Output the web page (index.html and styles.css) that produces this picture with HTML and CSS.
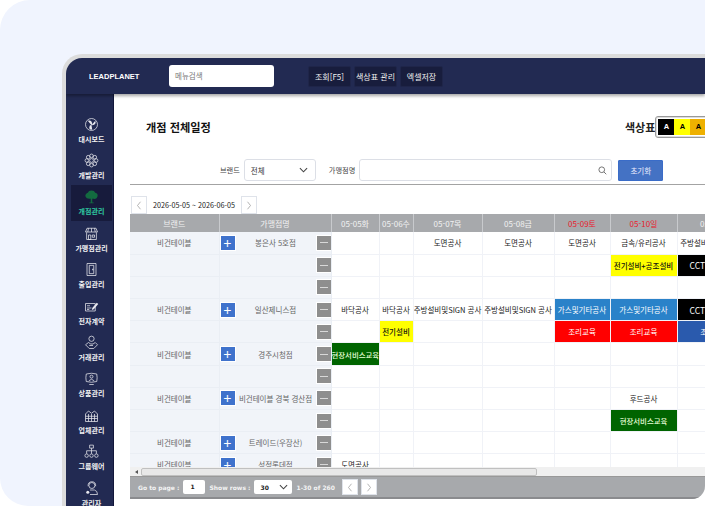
FILE: index.html
```html
<!DOCTYPE html>
<html lang="ko">
<head>
  <meta charset="UTF-8">
  <title>LEADPLANET - 개점 전체일정</title>
  <link rel="stylesheet" href="styles.css">
</head>
<body>
  <div class="panel">
    <div class="frame">

      <header class="topbar">
        <div class="logo">LEADPLANET</div>
        <div class="menu-search">메뉴검색</div>
        <div class="top-buttons">
          <button class="top-btn">조회[F5]</button>
          <button class="top-btn">색상표 관리</button>
          <button class="top-btn">엑셀저장</button>
        </div>
      </header>

      <div class="body">
        <nav class="sidebar">
          <a class="side-item">
            <svg viewBox="0 0 20 20"><circle cx="10" cy="10" r="8"/><path class="solid" d="M10 11 5 5q5-2 6 4zM10 11l5-6q2 5-4 6zM10 11l1 6q-6 0-3-6z"/></svg>
            <span>대시보드</span>
          </a>
          <a class="side-item">
            <svg viewBox="0 0 20 20"><circle cx="10" cy="10" r="2.6"/><circle cx="10" cy="3.8" r="2.4"/><circle cx="10" cy="16.2" r="2.4"/><circle cx="3.8" cy="10" r="2.4"/><circle cx="16.2" cy="10" r="2.4"/><circle cx="5.6" cy="5.6" r="2.4"/><circle cx="14.4" cy="5.6" r="2.4"/><circle cx="5.6" cy="14.4" r="2.4"/><circle cx="14.4" cy="14.4" r="2.4"/></svg>
            <span>개발관리</span>
          </a>
          <a class="side-item active">
            <svg viewBox="0 0 20 20"><path class="solid" d="M10 2q4 0 5 3 4 1 3 5t-5 3H7q-4 0-5-3t3-5q1-3 5-3z"/><path class="solid" d="M9 12h2v6h2v1H7v-1h2z"/></svg>
            <span>개점관리</span>
          </a>
          <a class="side-item">
            <svg viewBox="0 0 20 20"><path d="M4 3h12l2 5H2zM6 3 5 8M10 3v5M14 3l1 5"/><path d="M3.500 8.500V18h13V8.500M6 12h3v6H6zM11 12h3v3h-3z"/></svg>
            <span>가맹점관리</span>
          </a>
          <a class="side-item">
            <svg viewBox="0 0 20 20"><path d="M4 2h12v16H4zM7 4.500h6v11H7z"/><path class="solid" d="M11 9h1.500v2H11z"/></svg>
            <span>출입관리</span>
          </a>
          <a class="side-item">
            <svg viewBox="0 0 20 20"><path d="M2 6h13v10H2zM4 9h4M4 12h6M4 14h3"/><path class="solid" d="m11 12 6-7 2 1.500-6 7-2.500 1z"/></svg>
            <span>전자계약</span>
          </a>
          <a class="side-item">
            <svg viewBox="0 0 20 20"><circle cx="10" cy="5" r="3.500"/><path d="M2 13l4-3 3 2h3l3-2 3 3-5 5H7z"/><path d="M7 14h5"/></svg>
            <span>거래관리</span>
          </a>
          <a class="side-item">
            <svg viewBox="0 0 20 20"><path d="M3 4q7-2 14 0 1 5 0 10-7 2-14 0-1-5 0-10zM7 18h6"/><circle cx="10" cy="7.500" r="2"/><path d="M6.500 13q3.500-4 7 0"/></svg>
            <span>상품관리</span>
          </a>
          <a class="side-item">
            <svg viewBox="0 0 20 20"><path d="M2 8l4-4 4 3 4-3 4 4v10H2zM2 11h16M2 14h16M6 8v10M10 8v10M14 8v10"/></svg>
            <span>업체관리</span>
          </a>
          <a class="side-item">
            <svg viewBox="0 0 20 20"><path d="M7.500 1.500h5v4h-5zM10 5.500V9M3.500 13v-4h13v4M10 9v4"/><circle cx="3.500" cy="15.500" r="2.300"/><circle cx="10" cy="15.500" r="2.300"/><circle cx="16.500" cy="15.500" r="2.300"/></svg>
            <span>그룹웨어</span>
          </a>
          <a class="side-item">
            <svg viewBox="0 0 20 20"><circle cx="10.500" cy="6" r="4"/><path d="M5.500 7q-.5-6 5-6t5 6M8 18h10q0-5-4-6H8"/><circle class="solid" cx="5" cy="15" r="2"/></svg>
            <span>관리자</span>
          </a>
        </nav>

        <main class="main">
          <div class="title-row">
            <h1 class="page-title">개점 전체일정</h1>
            <div class="legend">
              <span class="legend-label">색상표</span>
              <div class="swatches">
                <span class="swatch sw-black">A</span>
                <span class="swatch sw-yellow">A</span>
                <span class="swatch sw-orange">A</span>
                <span class="swatch sw-olive">A</span>
              </div>
            </div>
          </div>

          <div class="filter-row">
            <label class="filter-label">브랜드</label>
            <div class="filter-select">
              <span>전체</span>
              <svg class="chev" viewBox="0 0 10 6"><path d="M1 1l4 4 4-4"/></svg>
            </div>
            <label class="filter-label store-label">가맹점명</label>
            <div class="filter-input">
              <svg class="search-ico" viewBox="0 0 12 12"><circle cx="5" cy="5" r="3.800"/><path d="M8 8l3 3"/></svg>
            </div>
            <button class="reset-btn">초기화</button>
          </div>

          <div class="date-nav">
            <button class="nav-btn"><svg viewBox="0 0 8 12"><path d="M6 1 2 6l4 5"/></svg></button>
            <span class="date-range">2026-05-05 ~ 2026-06-05</span>
            <button class="nav-btn"><svg viewBox="0 0 8 12"><path d="M2 1l4 5-4 5"/></svg></button>
          </div>

          <div class="grid-box">
            <div class="grid-scroll">
              <table class="grid">
                <colgroup>
                  <col class="c-brand"><col class="c-store"><col class="c-d1"><col class="c-d2"><col class="c-d3"><col class="c-d4"><col class="c-d5"><col class="c-d6"><col class="c-d7">
                </colgroup>
                <thead>
                  <tr>
                    <th>브랜드</th><th>가맹점명</th><th>05-05화</th><th>05-06수</th><th>05-07목</th><th>05-08금</th><th class="red">05-09토</th><th class="red">05-10일</th><th>05-11월</th>
                  </tr>
                </thead>
                <tbody>
                  <tr>
                    <td class="frozen">비건테이블</td>
                    <td class="frozen"><div class="store"><b class="plus">+</b><span>봉은사 5호점</span><b class="minus"></b></div></td>
                    <td></td><td></td><td>도면공사</td><td>도면공사</td><td>도면공사</td><td>금속/유리공사</td><td>주방설비및SIGN 공사</td>
                  </tr>
                  <tr>
                    <td class="frozen"></td>
                    <td class="frozen"><div class="store"><span></span><b class="minus"></b></div></td>
                    <td></td><td></td><td></td><td></td><td></td><td class="t-yellow">전기설비+공조설비</td><td class="t-black">CCTV</td>
                  </tr>
                  <tr>
                    <td class="frozen"></td>
                    <td class="frozen"><div class="store"><span></span><b class="minus"></b></div></td>
                    <td></td><td></td><td></td><td></td><td></td><td></td><td></td>
                  </tr>
                  <tr>
                    <td class="frozen">비건테이블</td>
                    <td class="frozen"><div class="store"><b class="plus">+</b><span>일산제니스점</span><b class="minus"></b></div></td>
                    <td>바닥공사</td><td>바닥공사</td><td>주방설비및SIGN 공사</td><td>주방설비및SIGN 공사</td><td class="t-blue">가스및기타공사</td><td class="t-blue">가스및기타공사</td><td class="t-black">CCTV</td>
                  </tr>
                  <tr>
                    <td class="frozen"></td>
                    <td class="frozen"><div class="store"><span></span><b class="minus"></b></div></td>
                    <td></td><td class="t-yellow">전기설비</td><td></td><td></td><td class="t-red">조리교육</td><td class="t-red">조리교육</td><td class="t-navy">조리교육</td>
                  </tr>
                  <tr>
                    <td class="frozen">비건테이블</td>
                    <td class="frozen"><div class="store"><b class="plus">+</b><span>경주시청점</span><b class="minus"></b></div></td>
                    <td class="t-green">현장서비스교육</td><td></td><td></td><td></td><td></td><td></td><td></td>
                  </tr>
                  <tr>
                    <td class="frozen"></td>
                    <td class="frozen"><div class="store"><span></span><b class="minus"></b></div></td>
                    <td></td><td></td><td></td><td></td><td></td><td></td><td></td>
                  </tr>
                  <tr>
                    <td class="frozen">비건테이블</td>
                    <td class="frozen"><div class="store"><b class="plus">+</b><span>비건테이블 경북 경산점</span><b class="minus"></b></div></td>
                    <td></td><td></td><td></td><td></td><td></td><td>후드공사</td><td></td>
                  </tr>
                  <tr>
                    <td class="frozen"></td>
                    <td class="frozen"><div class="store"><span></span><b class="minus"></b></div></td>
                    <td></td><td></td><td></td><td></td><td></td><td class="t-green">현장서비스교육</td><td></td>
                  </tr>
                  <tr>
                    <td class="frozen">비건테이블</td>
                    <td class="frozen"><div class="store"><b class="plus">+</b><span>트레이드(우장산)</span><b class="minus"></b></div></td>
                    <td></td><td></td><td></td><td></td><td></td><td></td><td></td>
                  </tr>
                  <tr>
                    <td class="frozen">비건테이블</td>
                    <td class="frozen"><div class="store"><b class="plus">+</b><span>성정롯데점</span><b class="minus"></b></div></td>
                    <td>도면공사</td><td></td><td></td><td></td><td></td><td></td><td></td>
                  </tr>
                </tbody>
              </table>
            </div>

            <div class="hscroll">
              <span class="hscroll-arrow"></span>
              <span class="hscroll-thumb"></span>
            </div>

            <div class="pager">
              <span>Go to page :</span>
              <span class="pager-input">1</span>
              <span>Show rows :</span>
              <span class="pager-select">30<svg class="chev" viewBox="0 0 10 6"><path d="M1 1l4 4 4-4"/></svg></span>
              <span>1-30 of 260</span>
              <div class="pager-nav">
                <button class="nav-btn"><svg viewBox="0 0 8 12"><path d="M6 1 2 6l4 5"/></svg></button>
                <button class="nav-btn"><svg viewBox="0 0 8 12"><path d="M2 1l4 5-4 5"/></svg></button>
              </div>
            </div>
          </div>
        </main>
      </div>
    </div>
  </div>
</body>
</html>
```

FILE: styles.css
```css
* {
  box-sizing: border-box;
}

html, body {
  margin: 0;
  height: 506px;
  overflow: hidden;
  background-color: #fff;
}

body {
  font-family: 'Noto Sans CJK KR', 'Noto Sans', sans-serif;
  color: #222;
}

button {
  font-family: inherit;
  cursor: pointer;
}

.panel {
  width: 705px;
  height: 506px;
  padding: 54px 0 0 62px;
  background-color: #f0f4fe;
  border-radius: 30px 0 0 28px;
  overflow: hidden;
}

.frame {
  width: 643px;
  height: 452px;
  display: flex;
  flex-direction: column;
  border: 4px solid #dcdcdc;
  border-width: 4px 0 0 4px;
  border-radius: 20px 0 0 0;
  overflow: hidden;
  background-color: #fff;
}

/* top bar */
.topbar {
  position: relative;
  z-index: 2;
  flex: 0 0 36px;
  display: flex;
  align-items: center;
  background-color: #222a52;
  box-shadow: 0 2px 3px rgba(0, 0, 0, 0.35);
}

.logo {
  width: 103px;
  padding-left: 23px;
  color: #fff;
  font-size: 7.5px;
  font-weight: 700;
  font-family: 'Liberation Sans', sans-serif;
  white-space: nowrap;
}

.menu-search {
  width: 105px;
  height: 22px;
  padding-left: 6px;
  line-height: 22px;
  font-size: 7.5px;
  color: #777;
  background-color: #fff;
  border-radius: 3px;
}

.top-buttons {
  display: flex;
  gap: 3px;
  margin-left: 34px;
  padding-top: 1px;
}

.top-btn {
  width: 43px;
  height: 21px;
  padding: 0;
  border: 1px solid #1f2549;
  border-radius: 2px;
  background-color: #181d3d;
  color: #f0f0f0;
  font-size: 8px;
  white-space: nowrap;
}

/* sidebar */
.body {
  flex: 1;
  display: flex;
  min-height: 0;
}

.sidebar {
  flex: 0 0 48px;
  padding: 18px 1px 0 5px;
  background-color: #222a52;
  border-right: 1px solid #12163a;
}

.side-item {
  height: 36.4px;
  display: flex;
  flex-direction: column;
  align-items: center;
  justify-content: center;
  gap: 3px;
  color: #f2f2f2;
  font-size: 7px;
  font-weight: 700;
  line-height: 9px;
  white-space: nowrap;
}

.side-item svg {
  width: 15px;
  height: 15px;
  fill: none;
  stroke: #e8e8ee;
  stroke-width: 1;
}

.side-item svg .solid {
  fill: #e8e8ee;
  stroke: none;
}

.side-item.active {
  background-color: #171b3c;
  color: #2fc9a0;
}

.side-item.active svg .solid {
  fill: #136b40;
}

/* main */
.main {
  flex: 1;
  min-width: 0;
  padding: 22px 0 0 16px;
}

.title-row {
  height: 22px;
  display: flex;
  justify-content: space-between;
  align-items: center;
}

.page-title {
  margin: 0 0 0 16px;
  font-size: 11.2px;
  font-weight: 700;
  color: #111;
}

.legend {
  width: 80px;
  display: flex;
  align-items: center;
  overflow: hidden;
}

.legend-label {
  flex: 0 0 29.5px;
  font-size: 11px;
  font-weight: 700;
  white-space: nowrap;
  color: #222;
}

.swatches {
  flex-shrink: 0;
  display: flex;
  padding: 2px;
  height: 22px;
  border: 1px solid #999;
  border-radius: 3px;
  box-shadow: 0 0 0 1px #ddd inset;
}

.swatch {
  width: 16px;
  height: 16px;
  line-height: 16px;
  text-align: center;
  font-size: 7.5px;
  font-weight: 700;
  font-family: 'Liberation Sans', sans-serif;
}

.sw-black { background-color: #000; color: #fff; }
.sw-yellow { background-color: #ff0; color: #000; }
.sw-orange { background-color: #eeb000; color: #000; }
.sw-olive { background-color: #8a9a00; color: #000; }

.filter-row {
  height: 26px;
  margin-top: 21px;
  padding: 0 0 3px 90px;
  display: flex;
  align-items: center;
  border-bottom: 1.5px solid #a3a3a3;
}

.filter-label {
  font-size: 7.2px;
  color: #444;
  white-space: nowrap;
}

.store-label {
  margin-left: 13px;
}

.filter-select {
  width: 72px;
  height: 22px;
  margin-left: 4px;
  padding: 0 7px 0 6px;
  display: flex;
  align-items: center;
  justify-content: space-between;
  font-size: 7.5px;
  color: #333;
  border: 1px solid #dcdfe6;
  border-radius: 3px;
}

.chev {
  width: 9px;
  height: 6px;
  fill: none;
  stroke: #444;
  stroke-width: 1.2;
}

.filter-input {
  width: 253px;
  height: 22px;
  margin-left: 4px;
  padding-right: 4px;
  display: flex;
  align-items: center;
  justify-content: flex-end;
  border: 1px solid #dcdfe6;
  border-radius: 3px;
}

.search-ico {
  width: 9px;
  height: 9px;
  fill: none;
  stroke: #666;
  stroke-width: 1.2;
}

.reset-btn {
  width: 45px;
  height: 21px;
  margin-left: 6px;
  padding: 0;
  border: 1px solid #3a6cc8;
  border-radius: 1px;
  background-color: #4472c4;
  color: #eef;
  font-size: 7.5px;
}

.date-nav {
  height: 18px;
  margin-top: 11px;
  padding-left: 1px;
  display: flex;
  align-items: center;
}

.nav-btn {
  width: 16px;
  height: 18px;
  padding: 0;
  display: flex;
  align-items: center;
  justify-content: center;
  background-color: #fff;
  border: 1px solid #dfe3ea;
}

.nav-btn svg {
  width: 6px;
  height: 9px;
  fill: none;
  stroke: #999;
  stroke-width: 1;
}

.date-range {
  width: 94px;
  text-align: center;
  font-size: 7.2px;
  color: #222;
  white-space: nowrap;
}

/* grid */
.grid-box {
  width: 575px;
  height: 285px;
  display: flex;
  flex-direction: column;
  border-radius: 0 0 13px 0;
  overflow: hidden;
}

.grid-scroll {
  flex: 0 0 253px;
  overflow: hidden;
}

.grid {
  width: 620px;
  table-layout: fixed;
  border-collapse: collapse;
  font-size: 7.5px;
}

.c-brand { width: 89px; }
.c-store { width: 112px; }
.c-d1 { width: 48px; }
.c-d2 { width: 34px; }
.c-d3 { width: 69px; }
.c-d4 { width: 72px; }
.c-d5 { width: 56px; }
.c-d6 { width: 67px; }
.c-d7 { width: 74px; }

.grid th {
  height: 18px;
  padding: 0;
  font-size: 8px;
  font-weight: 400;
  color: #f2f2f2;
  background-color: #a7a9ac;
  border-right: 1px solid #c8cacd;
  white-space: nowrap;
}

.grid th.red {
  color: #e8202c;
}

.grid td {
  height: 22.2px;
  padding: 0;
  text-align: center;
  white-space: nowrap;
  overflow: hidden;
  color: #222;
  border-right: 1px solid #f0f2f7;
  border-bottom: 1px solid #f0f2f7;
}

.grid td.frozen {
  background-color: #f1f4f9;
  color: #666;
  border-color: #eaeef4;
}

.store {
  display: flex;
  align-items: center;
  padding: 0 0 0 1px;
}

.store span {
  flex: 1;
  text-align: center;
}

.plus, .minus {
  flex: 0 0 14px;
  width: 14px;
  height: 14px;
  display: flex;
  align-items: center;
  justify-content: center;
}

.plus {
  background-color: #3f72cc;
  color: #fff;
  font-size: 14px;
  font-weight: 400;
  line-height: 14px;
  box-shadow: 0 0 0 1px #fff;
}

.minus {
  background-color: #8e8e8e;
  box-shadow: 0 0 0 1px #fff;
}

.minus::before {
  content: "";
  width: 8px;
  height: 1px;
  background-color: #d8d8d8;
}

.t-yellow { background-color: #ff0; color: #111 !important; font-weight: 500; }
.t-black { background-color: #000; color: #fff !important; text-align: left !important; padding-left: 12px !important; font-size: 8.5px; }
.t-blue { background-color: #2a82c9; color: #fff !important; }
.t-red { background-color: #f00; color: #fff !important; }
.t-navy { background-color: #2a5aad; color: #fff !important; }
.t-green { background-color: #006400; color: #e8ffd8 !important; font-size: 7.4px; font-weight: 500; }

.hscroll {
  flex: 0 0 9px;
  display: flex;
  align-items: center;
  padding-left: 3px;
  background-color: #f0f0f0;
}

.hscroll-arrow {
  width: 0;
  height: 0;
  border: 2px solid transparent;
  border-right: 3px solid #555;
}

.hscroll-thumb {
  width: 396px;
  height: 8px;
  margin-left: 3px;
  background-color: #e8e8e8;
  border: 1px solid #c0c0c0;
  border-radius: 2px;
}

.pager {
  flex: 1;
  display: flex;
  align-items: center;
  gap: 4px;
  padding-left: 8px;
  background-color: #a7a9ac;
  border-top: 1px solid #999;
  border-bottom: 2px solid #8a8b8e;
  color: #f4f4f4;
  font-family: 'DejaVu Sans', sans-serif;
  font-size: 6px;
  font-weight: 700;
  white-space: nowrap;
}

.pager-input {
  width: 22px;
  height: 14px;
  padding-left: 7px;
  line-height: 14px;
  background-color: #fff;
  border-radius: 2px;
  color: #222;
}

.pager-select {
  width: 38px;
  height: 14px;
  padding: 0 4px 0 6px;
  display: flex;
  align-items: center;
  justify-content: space-between;
  background-color: #fff;
  border-radius: 2px;
  color: #222;
}

.pager-nav {
  display: flex;
  gap: 3px;
  margin-left: 3px;
}

.pager-nav .nav-btn {
  height: 16px;
}
```
